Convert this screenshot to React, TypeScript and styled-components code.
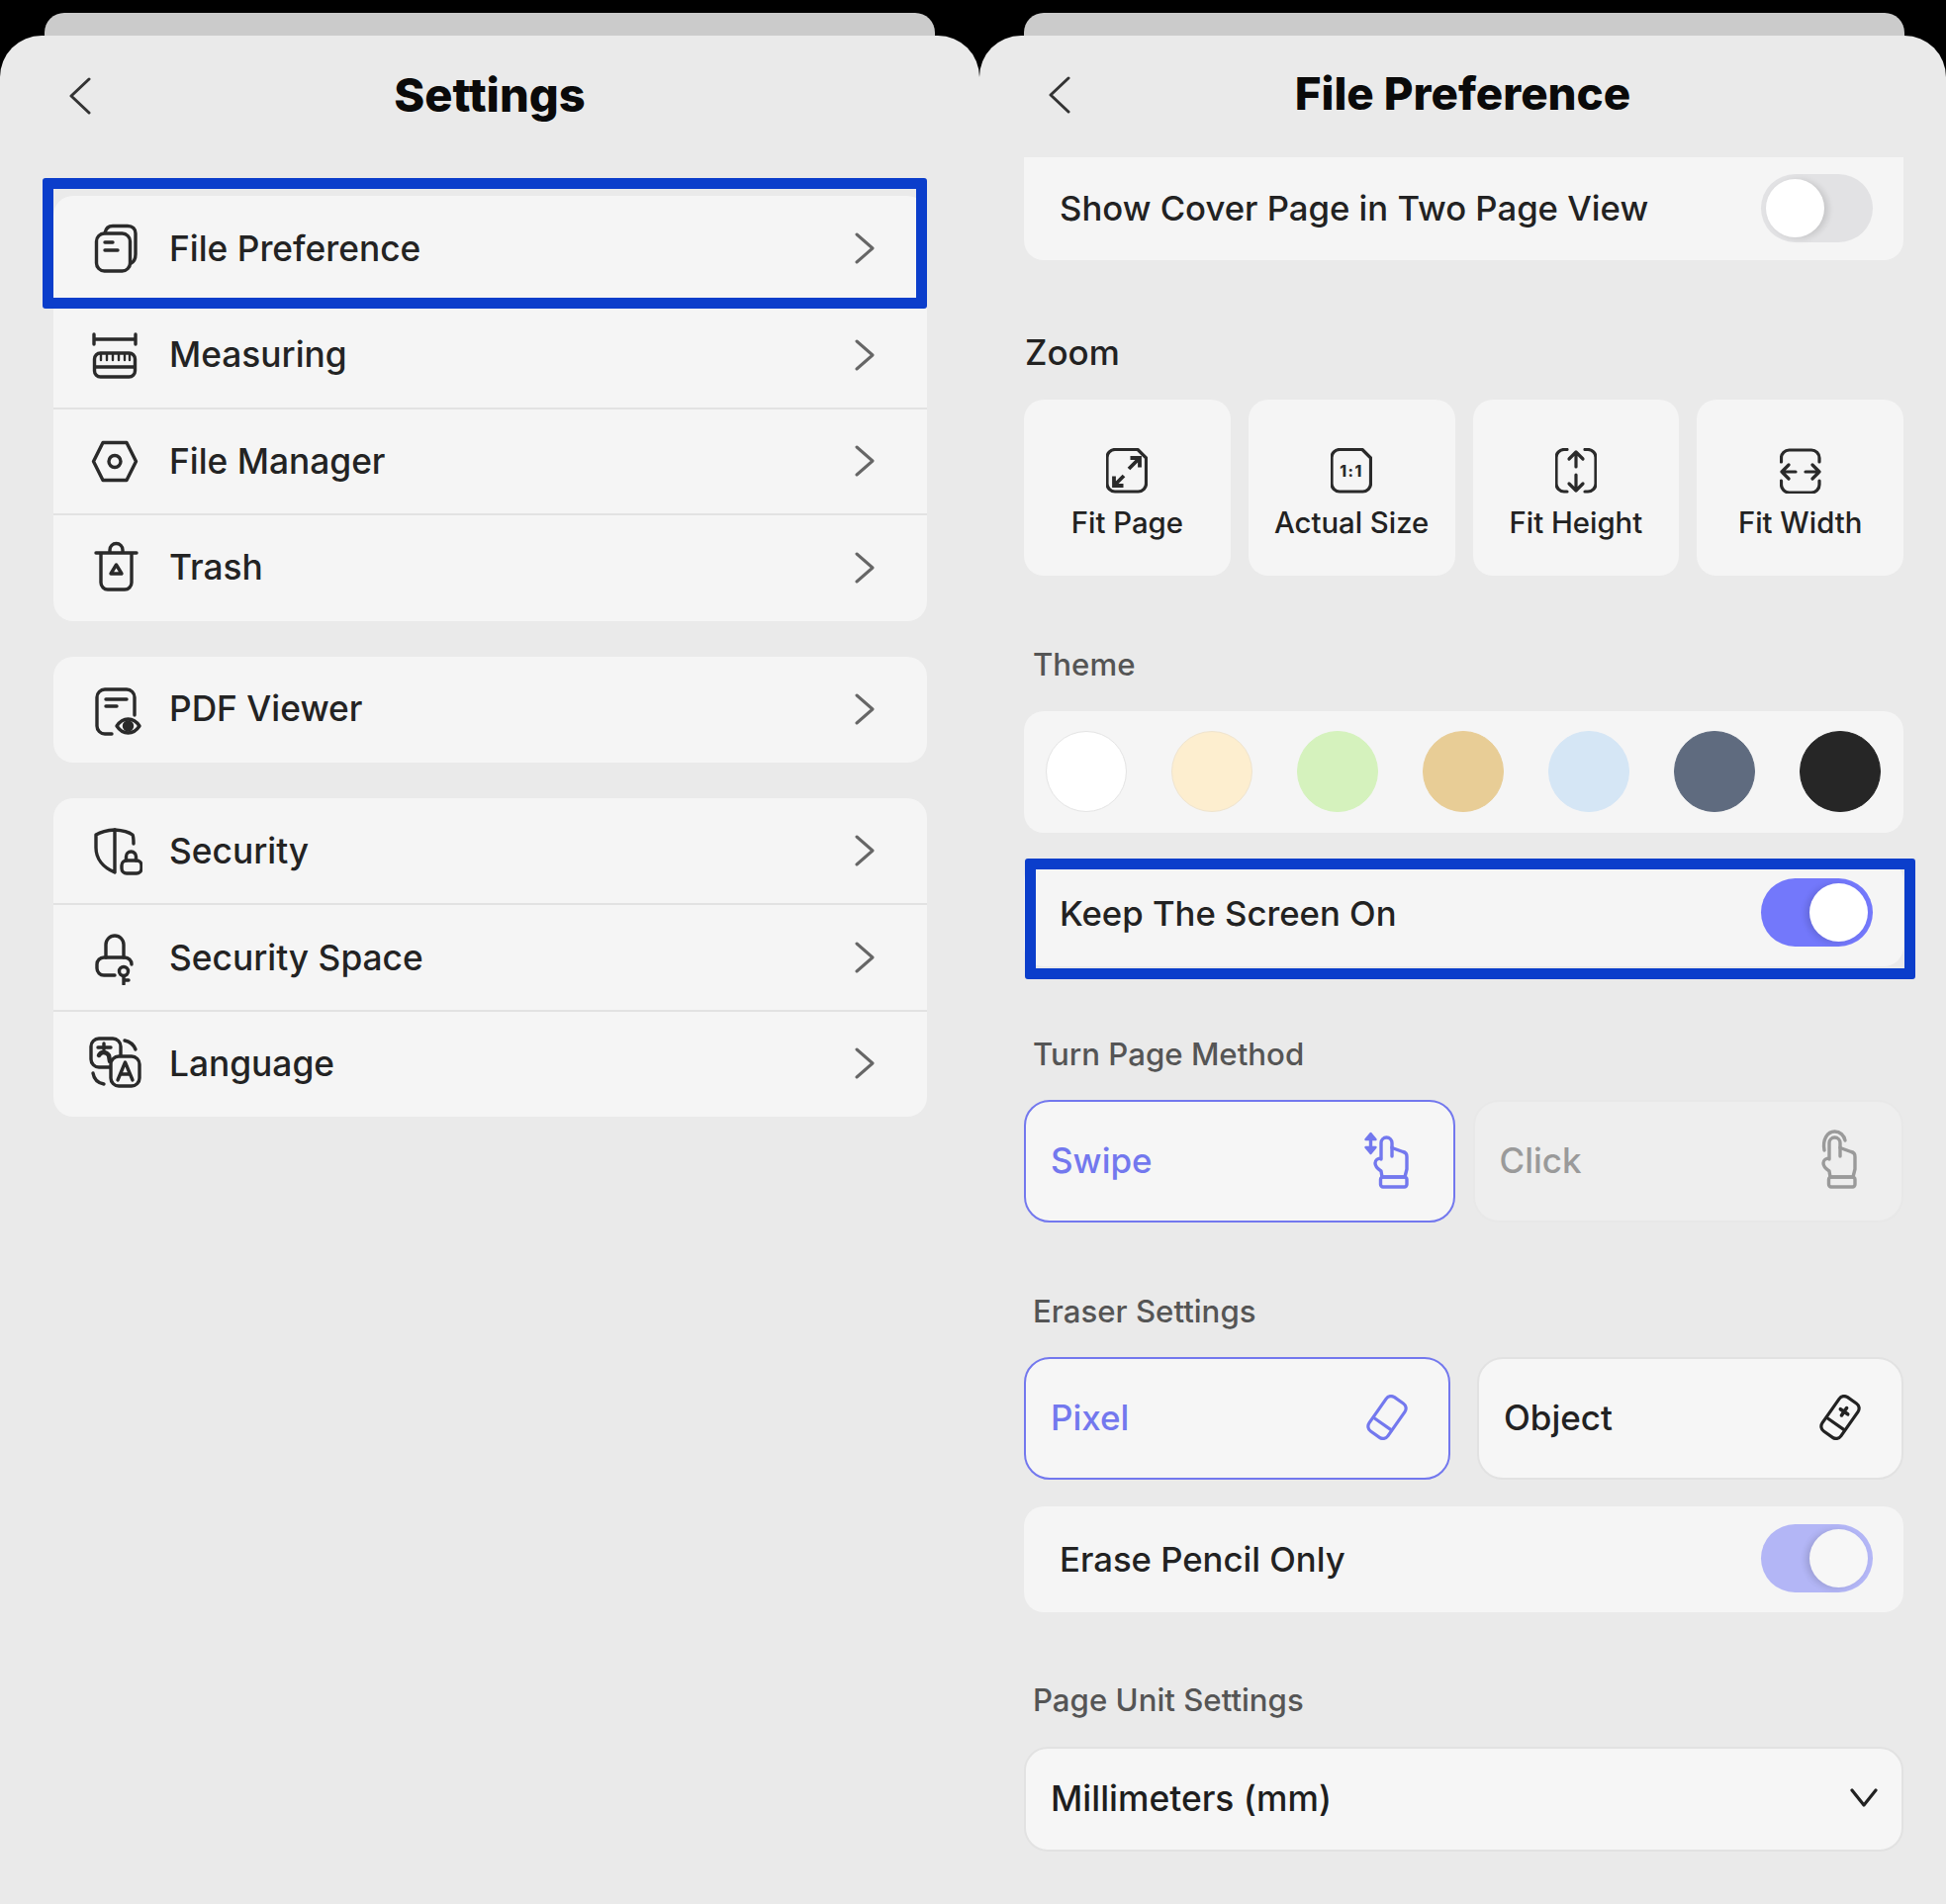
import React from 'react';
import styled, { createGlobalStyle } from 'styled-components';

const Global = createGlobalStyle`
  html, body { margin: 0; padding: 0; background: #000; }
  * { box-sizing: border-box; }
  body { font-family: Inter, "Liberation Sans", sans-serif; color: #222; }
`;

const Page = styled.div`
  display: flex;
  width: 1967px;
  height: 1925px;
  overflow: hidden;
  background: #000;
`;
const Column = styled.div<{ $w: number }>`
  width: ${p => p.$w}px;
  padding-top: 13px;
  display: flex;
  flex-direction: column;
`;
const Peek = styled.div<{ $l: number; $r: number }>`
  height: 23px;
  margin: 0 ${p => p.$r}px 0 ${p => p.$l}px;
  background: #cbcbcb;
  border-radius: 20px 20px 0 0;
`;
const Sheet = styled.div`
  flex: 1;
  background: #eaeaea;
  border-radius: 42px 42px 0 0;
  display: flex;
  flex-direction: column;
`;
const Header = styled.header<{ $h: number; $pb: number }>`
  position: relative;
  height: ${p => p.$h}px;
  padding-bottom: ${p => p.$pb}px;
  display: flex;
  align-items: center;
  justify-content: center;
`;
const Title = styled.h1<{ $size: number }>`
  margin: 0;
  font-size: ${p => p.$size}px;
  font-weight: 800;
  color: #0a0a0a;
`;
const BackWrap = styled.span<{ $l: number; $dy: number }>`
  position: absolute;
  left: ${p => p.$l}px;
  top: calc(50% - ${p => p.$dy}px);
  transform: translateY(-50%);
  display: flex;
`;
const SettingsBody = styled.div`
  padding: 35px 53px 0 54px;
  display: flex;
  flex-direction: column;
  gap: 36px;
`;
const Group = styled.div`
  background: #f5f5f5;
  border-radius: 20px;
`;
const Row = styled.div<{ $divider?: boolean }>`
  position: relative;
  height: ${p => (p.$divider ? 108.4 : 107.4)}px;
  margin-top: ${p => (p.$divider ? -1 : 0)}px;
  display: flex;
  align-items: center;
  padding: 0 53px 1px 34px;
  gap: 27px;
  font-size: 35.3px;
  font-weight: 500;
  color: #232323;
  border-top: ${p => (p.$divider ? '2px solid #e2e2e2' : 'none')};
  > span { flex: 1; }
`;
const Frame = styled.div<{ $t: number; $r: number; $b: number; $l: number }>`
  position: absolute;
  top: ${p => p.$t}px;
  right: ${p => p.$r}px;
  bottom: ${p => p.$b}px;
  left: ${p => p.$l}px;
  border: 11px solid #0b3ecb;
  border-radius: 3px;
  pointer-events: none;
`;
const FileBody = styled.div`
  padding: 0 43px 0 45px;
  display: flex;
  flex-direction: column;
`;
const Card = styled.div<{ $h: number; $top?: number; $flatTop?: boolean }>`
  position: relative;
  height: ${p => p.$h}px;
  margin-top: ${p => p.$top ?? 0}px;
  padding: 0 31px 2px 36px;
  background: #f5f5f5;
  border-radius: ${p => (p.$flatTop ? '0 0 20px 20px' : '20px')};
  display: flex;
  align-items: center;
  justify-content: space-between;
  font-size: 34.7px;
  font-weight: 500;
  color: #222;
`;
const Label = styled.div<{ $top: number; $bottom?: number; $dark?: boolean }>`
  height: 40px;
  line-height: 40px;
  margin: ${p => p.$top}px 0 ${p => p.$bottom ?? 27}px ${p => (p.$dark ? 1 : 9)}px;
  font-size: ${p => (p.$dark ? 35 : 31.2)}px;
  font-weight: 500;
  color: ${p => (p.$dark ? '#222' : '#555')};
`;
const ToggleTrack = styled.div<{ $on: boolean; $soft?: boolean }>`
  width: 113px;
  height: 69px;
  border-radius: 35px;
  padding: 5px;
  display: flex;
  justify-content: ${p => (p.$on ? 'flex-end' : 'flex-start')};
  background: ${p => (!p.$on ? '#e2e2e4' : p.$soft ? '#b3b6f6' : '#7378fb')};
  > i {
    display: block;
    width: 59px;
    height: 59px;
    border-radius: 50%;
    background: ${p => (p.$soft ? '#f7f7f7' : '#fff')};
    box-shadow: ${p => (p.$on ? '-4px 1px 6px rgba(0,0,0,.12)' : '4px 1px 6px rgba(0,0,0,.12)')};
  }
`;
const ZoomGrid = styled.div`
  display: grid;
  grid-template-columns: repeat(4, 1fr);
  gap: 18px;
`;
const ZoomTile = styled.div`
  height: 178px;
  padding-top: 49px;
  background: #f5f5f5;
  border-radius: 20px;
  display: flex;
  flex-direction: column;
  align-items: center;
  font-size: 29.3px;
  font-weight: 500;
  color: #222;
  > span { margin-top: 11px; line-height: 38px; }
`;
const Swatches = styled.div`
  height: 123px;
  padding: 0 23px 2px 22px;
  background: #f5f5f5;
  border-radius: 20px;
  display: flex;
  align-items: center;
  justify-content: space-between;
`;
const Swatch = styled.div<{ $c: string; $edge?: string }>`
  width: 82px;
  height: 82px;
  border-radius: 50%;
  background: ${p => p.$c};
  border: 1.5px solid ${p => p.$edge ?? p.$c};
`;
const ChoiceRow = styled.div<{ $gap: number }>`
  display: grid;
  grid-template-columns: 1fr 1fr;
  gap: ${p => p.$gap}px;
`;
const Choice = styled.div<{ $state: 'active' | 'idle' | 'disabled' }>`
  height: 124px;
  padding: 0 39px 2px 25px;
  border-radius: 26px;
  display: flex;
  align-items: center;
  justify-content: space-between;
  font-size: 35px;
  font-weight: 500;
  background: ${p => (p.$state === 'disabled' ? '#eeeeee' : '#f6f6f6')};
  border: 2px solid ${p => (p.$state === 'active' ? '#7378ee' : p.$state === 'disabled' ? '#e8e8e8' : '#e2e2e2')};
  color: ${p => (p.$state === 'active' ? '#7378ee' : p.$state === 'disabled' ? '#9a9a9a' : '#222')};
`;
const Select = styled.div`
  height: 106px;
  padding: 0 24px 2px 25px;
  background: #f6f6f6;
  border: 2px solid #e2e2e2;
  border-radius: 24px;
  display: flex;
  align-items: center;
  justify-content: space-between;
  font-size: 35.4px;
  font-weight: 500;
  color: #1e1e1e;
`;

const Back = () => (
  <svg width="24" height="38" viewBox="0 0 24 38" fill="none" stroke="#333" strokeWidth="3" strokeLinecap="round" strokeLinejoin="round">
    <path d="M21 2 L3 19 L21 36" />
  </svg>
);
const Chevron = () => (
  <svg width="20" height="32" viewBox="0 0 20 32" fill="none" stroke="#666" strokeWidth="3" strokeLinecap="round" strokeLinejoin="round">
    <path d="M2 2 L18 16 L2 30" />
  </svg>
);
const Ico = ({ children }: { children: React.ReactNode }) => (
  <svg width="56" height="56" viewBox="0 0 56 56" fill="none" stroke="#2a2a2a" strokeWidth="3.4" strokeLinecap="round" strokeLinejoin="round" style={{ flex: 'none' }}>
    {children}
  </svg>
);
const FileIcon = () => (
  <Ico>
    <rect x="9.5" y="13" width="34" height="38" rx="8" />
    <path d="M18 12.5 C19 7.5 22 5.5 26 5.5 H41 C46 5.5 49 8.5 49 13 V34 C49 39 47 42 44 43.5" />
    <path d="M18 22 H26 M18 30 H31" />
  </Ico>
);
const MeasureIcon = () => (
  <Ico>
    <path d="M7 7 V17 M49 7 V17 M7 12 H49" />
    <rect x="7.5" y="26" width="41" height="24" rx="6" />
    <path d="M8 40 H48" />
    <path d="M14 27 V33 M20 27 V33 M26 27 V33 M32 27 V33 M38 27 V33 M43 27 V33" strokeWidth="2.4" />
  </Ico>
);
const HexIcon = () => (
  <Ico>
    <path d="M6.5 28.5 L16 9.5 H40 L49.5 28.5 L40 47.5 H16 Z" />
    <circle cx="28" cy="28.5" r="6" />
  </Ico>
);
const TrashIcon = () => (
  <Ico>
    <path d="M9 13 H50" />
    <path d="M23 12 V10 a6.5 6.5 0 0 1 13 0 V12" />
    <path d="M14 14 V43 a7 7 0 0 0 7 7 H38 a7 7 0 0 0 7 -7 V14" />
    <path d="M29.5 25 L35 34 H24 Z" />
  </Ico>
);
const PdfIcon = () => (
  <Ico>
    <path d="M48 34 V16 a8 8 0 0 0 -8 -8 H18 a8 8 0 0 0 -8 8 V45 a8 8 0 0 0 8 8 H25" />
    <path d="M19 18 H40 M19 25 H30" />
    <path d="M30 45 C34 39 38 38 41.5 38 C45 38 49 39 53 45 C49 51 45 52 41.5 52 C38 52 34 51 30 45 Z" />
    <circle cx="41.5" cy="45" r="4" fill="#2a2a2a" />
  </Ico>
);
const ShieldIcon = () => (
  <Ico>
    <path d="M28 7 C20 7.5 14 9 9 12 V25 C9 36 16 45 28 50 Z" />
    <path d="M28 7 C36 7.5 42 9 46 12 C47 14 47 17 47 21" />
    <rect x="35" y="38" width="20" height="13" rx="5" />
    <path d="M39.5 38 V34 a5 5 0 0 1 10 0 V38" />
  </Ico>
);
const LockIcon = () => (
  <Ico>
    <path d="M19 28 V15 a9 9 0 0 1 18 0 V28" />
    <path d="M28 46 H17 a7 7 0 0 1 -7 -7 V35 a7 7 0 0 1 7 -7 H38 a7 7 0 0 1 7 7" />
    <circle cx="37" cy="42" r="4.5" />
    <path d="M37 47 V55 M37 51 H42" />
  </Ico>
);
const LangIcon = () => (
  <Ico>
    <path d="M23 32 H12 a8 8 0 0 1 -8 -8 V11 a8 8 0 0 1 8 -8 H26 a8 8 0 0 1 8 8 V20" />
    <rect x="24" y="21" width="29" height="30" rx="8" />
    <path d="M31 45 L38.5 27 L46 45 M33.5 39 H43.5" />
    <path d="M38 5 C43 6 47 9 49 14" />
    <path d="M6 38 C7 44 11 48 17 49" />
    <path d="M11 12 H24 M17 8 V14" />
    <path d="M12 20 C14 16 19 16 22 20 L23 26" strokeWidth="4.5" />
  </Ico>
);

const TileIcon = ({ children }: { children: React.ReactNode }) => (
  <svg width="42" height="46" viewBox="0 0 42 46" fill="none" stroke="#2a2a2a" strokeWidth="3.2" strokeLinecap="round" strokeLinejoin="round">
    {children}
  </svg>
);
const Outline = 'M9 1.5 H32 L40.5 10 V36 a8 8 0 0 1 -8 8 H9 a8 8 0 0 1 -8 -8 V9.5 a8 8 0 0 1 8 -8 Z';
const FitPage = () => (
  <TileIcon>
    <path d={Outline} />
    <path d="M23 21 L33 11 M24.5 10 H34 V19.5 M8 38 L18 28 M8 28.5 V38 H17.5" strokeWidth="3.8" strokeLinecap="butt" strokeLinejoin="miter" />
  </TileIcon>
);
const ActualSize = () => (
  <TileIcon>
    <path d={Outline} />
    <text x="21" y="28.5" textAnchor="middle" fontFamily="Inter, sans-serif" fontWeight="800" fontSize="15.5" fill="#2a2a2a" stroke="none" letterSpacing="1.5">1:1</text>
  </TileIcon>
);
const FitHeight = () => (
  <TileIcon>
    <path d="M12 1.5 H9 a8 8 0 0 0 -8 8 V36 a8 8 0 0 0 8 8 H12 M30 1.5 H33 a8 8 0 0 1 8 8 V36 a8 8 0 0 1 -8 8 H30" />
    <path d="M21 5 V19 M14 11 L21 4 L28 11 M21 27 V43 M14 36 L21 43 L28 36" />
  </TileIcon>
);
const FitWidth = () => (
  <TileIcon>
    <path d="M1.5 14 V10 a8 8 0 0 1 8 -8 H32 a8 8 0 0 1 8 8 V14 M1.5 33 V37 a8 8 0 0 0 8 8 H32 a8 8 0 0 0 8 -8 V33" />
    <path d="M16 24 H2 M9 17 L2 24 L9 31 M26 24 H40 M33 17 L40 24 L33 31" />
  </TileIcon>
);
const Hand = () => (
  <>
    <path d="M21 30 V13.5 a5.5 5.5 0 0 1 11 0 V18.5 L43 22.5 a5 5 0 0 1 4 5 V40 L45 48 H22 L21 42 C18 40 15 38 15 34 C15 31 18 29 21 29" />
    <rect x="20.5" y="48" width="26.5" height="10" rx="2.5" />
    <path d="M32 18 V27" />
  </>
);
const SwipeIcon = () => (
  <svg width="55" height="62" viewBox="0 0 55 62" fill="none" stroke="#7378ee" strokeWidth="3.4" strokeLinecap="round" strokeLinejoin="round">
    <Hand />
    <path d="M10.5 6 V21" />
    <path d="M5.5 10 L10.5 4 L15.5 10 Z M5.5 18 L10.5 24 L15.5 18 Z" fill="#7378ee" strokeWidth="2.4" />
  </svg>
);
const ClickIcon = () => (
  <svg width="55" height="62" viewBox="0 0 55 62" fill="none" stroke="#9a9a9a" strokeWidth="3.4" strokeLinecap="round" strokeLinejoin="round">
    <Hand />
    <path d="M16 21 C14 10 19 2 26.5 2 C32 2 36 6 37 11" />
  </svg>
);
const Eraser = ({ color, plus }: { color: string; plus?: boolean }) => (
  <svg width="46" height="46" viewBox="-23 -23 46 46" fill="none" stroke={color} strokeWidth="3.2" strokeLinecap="round" strokeLinejoin="round">
    <g transform="rotate(35)">
      <rect x="-11.5" y="-21" width="23" height="42" rx="6" />
      <path d="M-11 8 H11" />
      {plus && <path d="M-4.5 -7 H4.5 M0 -11.5 V-2.5" strokeWidth="3.6" />}
    </g>
  </svg>
);
const Caret = () => (
  <svg width="28" height="20" viewBox="0 0 28 20" fill="none" stroke="#222" strokeWidth="3.2" strokeLinecap="round" strokeLinejoin="round">
    <path d="M2 2 L14 17 L26 2" />
  </svg>
);

const Toggle = ({ on, soft }: { on: boolean; soft?: boolean }) => (
  <ToggleTrack $on={on} $soft={soft}><i /></ToggleTrack>
);

const SWATCHES = [
  { c: '#ffffff', edge: '#e4e4e4' },
  { c: '#fdeecf', edge: '#efe4cf' },
  { c: '#d5f2bd' },
  { c: '#e8cd96' },
  { c: '#d5e6f5' },
  { c: '#5f6b7f' },
  { c: '#262626' },
];
const TILES = [
  { t: 'Fit Page', I: FitPage },
  { t: 'Actual Size', I: ActualSize },
  { t: 'Fit Height', I: FitHeight },
  { t: 'Fit Width', I: FitWidth },
];

const ListRow = ({ icon, text, divider, highlight }: { icon: React.ReactNode; text: string; divider?: boolean; highlight?: boolean }) => (
  <Row $divider={divider}>
    {icon}
    <span>{text}</span>
    <Chevron />
    {highlight && <Frame $t={-18} $r={0} $b={-7} $l={-11} />}
  </Row>
);

export default function App() {
  return (
    <Page>
      <Global />
      <Column $w={990}>
        <Peek $l={45} $r={45} />
        <Sheet>
          <Header $h={127} $pb={9}>
            <BackWrap $l={69} $dy={3}><Back /></BackWrap>
            <Title $size={47}>Settings</Title>
          </Header>
          <SettingsBody>
            <Group>
              <ListRow icon={<FileIcon />} text="File Preference" highlight />
              <ListRow icon={<MeasureIcon />} text="Measuring" />
              <ListRow icon={<HexIcon />} text="File Manager" divider />
              <ListRow icon={<TrashIcon />} text="Trash" divider />
            </Group>
            <Group>
              <ListRow icon={<PdfIcon />} text="PDF Viewer" />
            </Group>
            <Group>
              <ListRow icon={<ShieldIcon />} text="Security" />
              <ListRow icon={<LockIcon />} text="Security Space" divider />
              <ListRow icon={<LangIcon />} text="Language" divider />
            </Group>
          </SettingsBody>
        </Sheet>
      </Column>
      <Column $w={977}>
        <Peek $l={45} $r={42} />
        <Sheet>
          <Header $h={123} $pb={7}>
            <BackWrap $l={69} $dy={2}><Back /></BackWrap>
            <Title $size={45.7}>File Preference</Title>
          </Header>
          <FileBody>
            <Card $h={104} $flatTop>
              <span>Show Cover Page in Two Page View</span>
              <Toggle on={false} />
            </Card>
            <Label $top={73} $bottom={28} $dark>Zoom</Label>
            <ZoomGrid>
              {TILES.map(({ t, I }) => (
                <ZoomTile key={t}>
                  <I />
                  <span>{t}</span>
                </ZoomTile>
              ))}
            </ZoomGrid>
            <Label $top={70} $bottom={27}>Theme</Label>
            <Swatches>
              {SWATCHES.map(s => <Swatch key={s.c} $c={s.c} $edge={s.edge} />)}
            </Swatches>
            <Card $h={107} $top={28}>
              <span>Keep The Screen On</span>
              <Toggle on />
              <Frame $t={-2} $r={-12} $b={-13} $l={1} />
            </Card>
            <Label $top={69} $bottom={26}>Turn Page Method</Label>
            <ChoiceRow $gap={18}>
              <Choice $state="active"><span>Swipe</span><SwipeIcon /></Choice>
              <Choice $state="disabled"><span>Click</span><ClickIcon /></Choice>
            </ChoiceRow>
            <Label $top={70} $bottom={26}>Eraser Settings</Label>
            <ChoiceRow $gap={27}>
              <Choice $state="active"><span>Pixel</span><Eraser color="#7378ee" /></Choice>
              <Choice $state="idle"><span>Object</span><Eraser color="#222" plus /></Choice>
            </ChoiceRow>
            <Card $h={107} $top={27}>
              <span>Erase Pencil Only</span>
              <Toggle on soft />
            </Card>
            <Label $top={69}>Page Unit Settings</Label>
            <Select>
              <span>Millimeters (mm)</span>
              <Caret />
            </Select>
          </FileBody>
        </Sheet>
      </Column>
    </Page>
  );
}
